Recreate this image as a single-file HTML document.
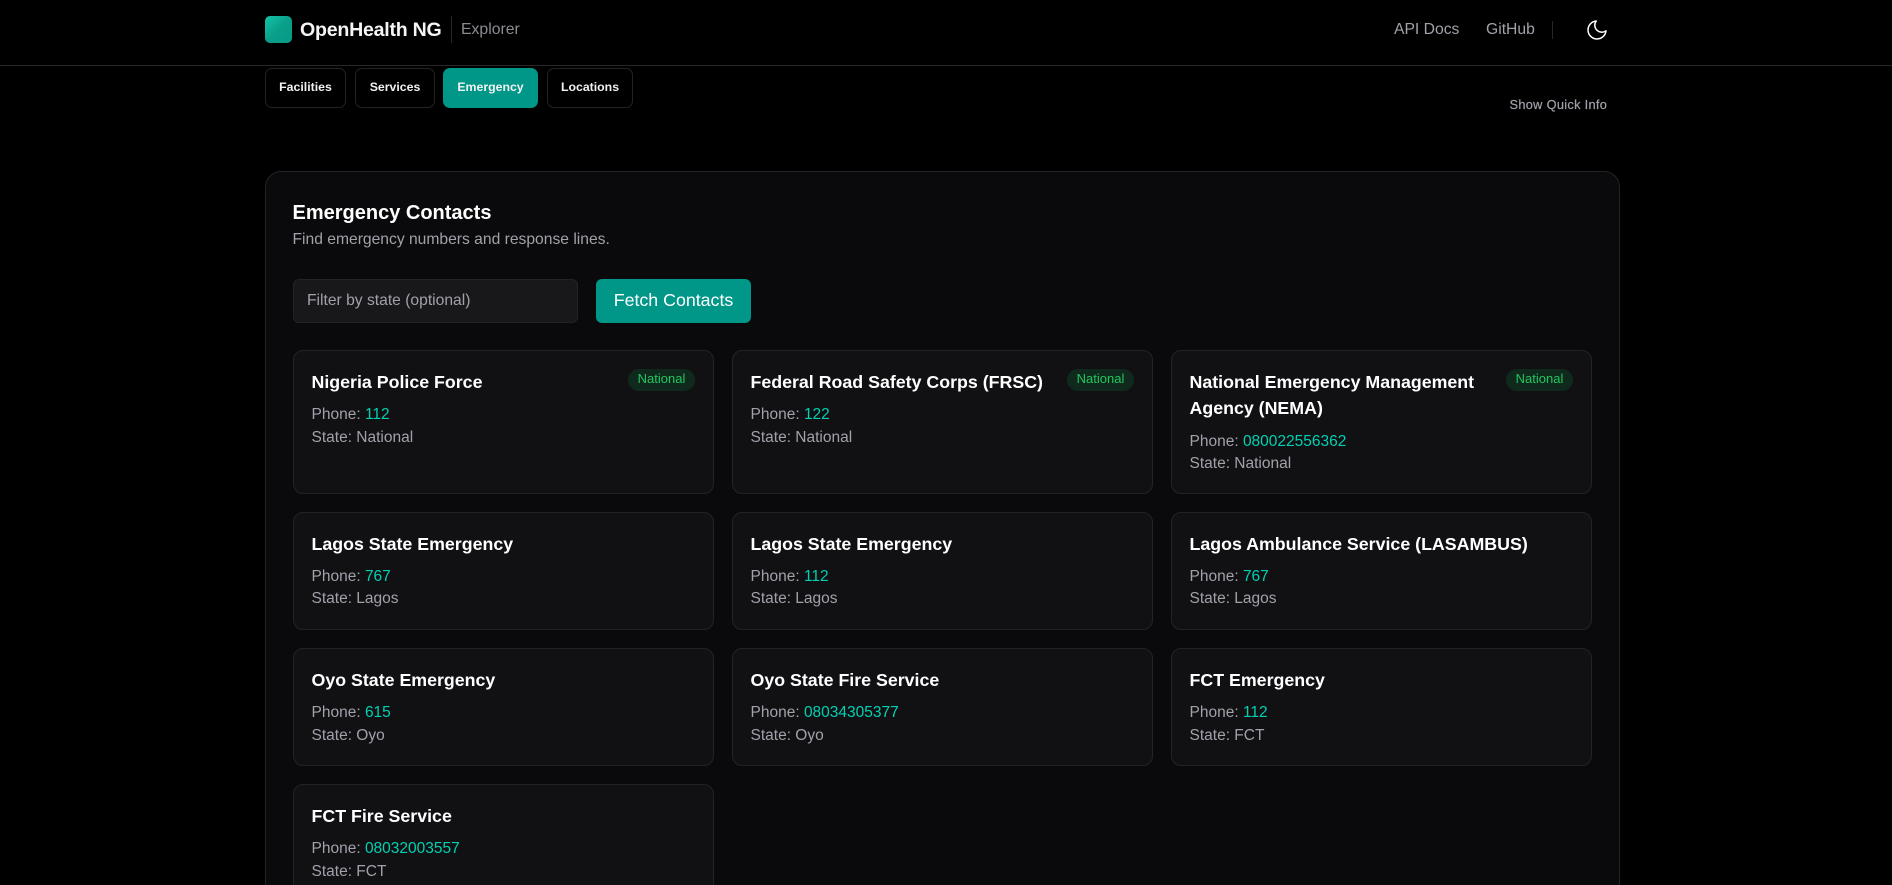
<!DOCTYPE html>
<html lang="en">
<head>
<meta charset="utf-8">
<title>OpenHealth NG Explorer</title>
<style>
*{box-sizing:border-box;margin:0;padding:0}
html,body{width:1892px;height:885px;overflow:hidden;background:#000;font-family:"Liberation Sans",Arial,sans-serif;color:#fff}
#root{position:relative;width:1892px;height:885px;overflow:hidden;background:#000}
.a{position:absolute;white-space:nowrap}
.nav-line{position:absolute;left:0;top:65px;width:1892px;height:1px;background:#27272a}
.logo{position:absolute;left:265px;top:16px;width:27px;height:27px;border-radius:5px;background:linear-gradient(135deg,#14c4a8 0%,#0fb69c 20%,#0a9f88 50%,#059b86 100%)}
.tab{position:absolute;top:68px;height:40px;border:1px solid #232327;border-radius:7px;font-size:12.3px;font-weight:700;line-height:37px;text-align:center;color:#f2f2f2;background:#000}
.tab.on{background:#009688;border-color:#009688}
.panel{position:absolute;left:265px;top:171px;width:1355px;height:714px;background:#0a0a0c;border:1px solid #232327;border-bottom:0;border-radius:16px 16px 0 0}
.input{position:absolute;left:293px;top:279px;width:285px;height:44px;background:#18181b;border:1px solid #232327;border-radius:6px;color:#a1a1aa;font-size:15.65px;line-height:41px;padding-left:13px}
.btn{position:absolute;left:596px;top:279px;width:155px;height:44px;background:#009688;border-radius:6px;color:#fff;font-size:17.8px;line-height:42px;text-align:center}
.card{position:absolute;width:421px;background:#111114;border:1px solid #232327;border-radius:10px}
.t{position:absolute;left:17.5px;font-size:17.8px;font-weight:700;line-height:26px;white-space:nowrap;color:#fff}
.l{position:absolute;left:17.5px;font-size:15.5px;line-height:22px;white-space:nowrap;color:#a1a1aa}
.l b{font-weight:400;color:#00d1b2}
.badge{position:absolute;right:18px;top:18px;width:67px;height:22px;border-radius:11px;background:#0f2a1d;color:#22c55e;font-size:13px;line-height:20px;text-align:center}
</style>
</head>
<body>
<div id="root">
<div class="logo"></div>
<div class="a" style="left:300px;top:17px;font-size:19.6px;font-weight:700;line-height:26px;letter-spacing:-.25px;color:#f5f5f5">OpenHealth NG</div>
<div class="a" style="left:451px;top:16px;width:1px;height:27px;background:#27272a"></div>
<div class="a" style="left:461px;top:18px;font-size:15.8px;line-height:24px;color:#8b8b93">Explorer</div>
<div class="a" style="left:1394px;top:18px;font-size:15.7px;line-height:24px;color:#a1a1aa">API Docs</div>
<div class="a" style="left:1486px;top:18px;font-size:15.7px;line-height:24px;color:#a1a1aa">GitHub</div>
<div class="a" style="left:1552px;top:21px;width:1px;height:18px;background:#27272a"></div>
<svg class="a" style="left:1584.5px;top:17.5px" width="24" height="24" viewBox="0 0 24 24" fill="none" stroke="#fff" stroke-width="1.5" stroke-linecap="round" stroke-linejoin="round"><path d="M21 12.8A9 9 0 1 1 11.2 3a7 7 0 0 0 9.8 9.8z"/></svg>
<div class="nav-line"></div>

<div class="tab" style="left:265px;width:81px">Facilities</div>
<div class="tab" style="left:355px;width:80px">Services</div>
<div class="tab on" style="left:443px;width:95px">Emergency</div>
<div class="tab" style="left:547px;width:86px">Locations</div>
<div class="a" style="left:1509.5px;top:95px;font-size:12.8px;line-height:20px;letter-spacing:.3px;color:#a1a1aa;-webkit-text-stroke:.2px #a1a1aa">Show Quick Info</div>

<div class="panel"></div>
<div class="a" style="left:292.5px;top:199.5px;font-size:20px;font-weight:700;line-height:26px">Emergency Contacts</div>
<div class="a" style="left:292.5px;top:229px;font-size:15.65px;line-height:22px;color:#a1a1aa">Find emergency numbers and response lines.</div>
<div class="input">Filter by state (optional)</div>
<div class="btn">Fetch Contacts</div>

<div class="card" style="left:293px;top:350px;height:144px"><div class="t" style="top:17.5px">Nigeria Police Force</div><div class="badge">National</div><div class="l" style="top:52.5px">Phone: <b>112</b></div><div class="l" style="top:75.5px">State: National</div></div>
<div class="card" style="left:732px;top:350px;height:144px"><div class="t" style="top:17.5px">Federal Road Safety Corps (FRSC)</div><div class="badge">National</div><div class="l" style="top:52.5px">Phone: <b>122</b></div><div class="l" style="top:75.5px">State: National</div></div>
<div class="card" style="left:1171px;top:350px;height:144px"><div class="t" style="top:17.5px">National Emergency Management</div><div class="t" style="top:43.5px">Agency (NEMA)</div><div class="badge">National</div><div class="l" style="top:79.5px">Phone: <b>080022556362</b></div><div class="l" style="top:102px">State: National</div></div>

<div class="card" style="left:293px;top:512px;height:118px"><div class="t" style="top:17.5px">Lagos State Emergency</div><div class="l" style="top:53px">Phone: <b>767</b></div><div class="l" style="top:75px">State: Lagos</div></div>
<div class="card" style="left:732px;top:512px;height:118px"><div class="t" style="top:17.5px">Lagos State Emergency</div><div class="l" style="top:53px">Phone: <b>112</b></div><div class="l" style="top:75px">State: Lagos</div></div>
<div class="card" style="left:1171px;top:512px;height:118px"><div class="t" style="top:17.5px">Lagos Ambulance Service (LASAMBUS)</div><div class="l" style="top:53px">Phone: <b>767</b></div><div class="l" style="top:75px">State: Lagos</div></div>

<div class="card" style="left:293px;top:648px;height:118px"><div class="t" style="top:17.5px">Oyo State Emergency</div><div class="l" style="top:52.5px">Phone: <b>615</b></div><div class="l" style="top:75.5px">State: Oyo</div></div>
<div class="card" style="left:732px;top:648px;height:118px"><div class="t" style="top:17.5px">Oyo State Fire Service</div><div class="l" style="top:52.5px">Phone: <b>08034305377</b></div><div class="l" style="top:75.5px">State: Oyo</div></div>
<div class="card" style="left:1171px;top:648px;height:118px"><div class="t" style="top:17.5px">FCT Emergency</div><div class="l" style="top:52.5px">Phone: <b>112</b></div><div class="l" style="top:75.5px">State: FCT</div></div>

<div class="card" style="left:293px;top:784px;height:101px;border-bottom:0;border-radius:10px 10px 0 0"><div class="t" style="top:17.5px">FCT Fire Service</div><div class="l" style="top:52.5px">Phone: <b>08032003557</b></div><div class="l" style="top:75.5px">State: FCT</div></div>
</div>
</body>
</html>
